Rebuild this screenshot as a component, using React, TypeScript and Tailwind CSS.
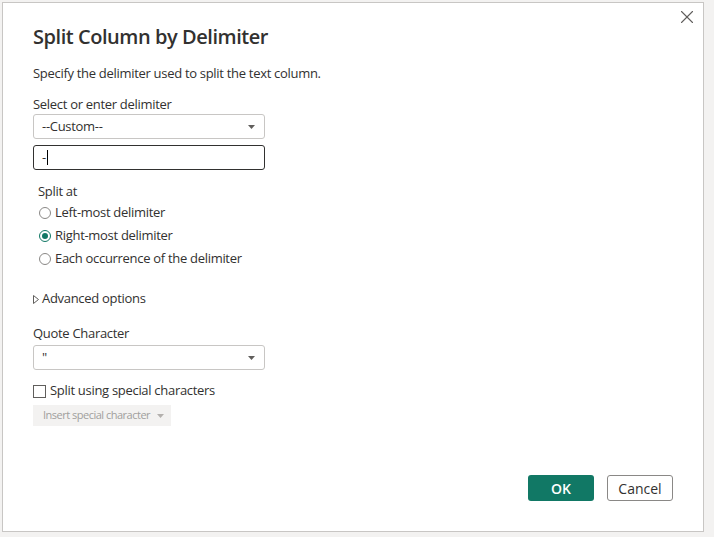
import { X } from "lucide-react";

const font = "font-['Segoe_UI','Open_Sans',sans-serif]";

function Caret({ color = "#605e5c" }: { color?: string }) {
  return (
    <svg width="7" height="4" viewBox="0 0 7 4">
      <path d="M0 0 L7 0 L3.5 4 Z" fill={color} />
    </svg>
  );
}

function Select({ value }: { value: string }) {
  return (
    <div className="flex h-[25px] w-[232px] items-center justify-between rounded-[3px] border border-[#c8c6c4] bg-white pl-[8px] pr-[9px] text-[13px] text-[#323130]">
      <span>{value}</span>
      <Caret />
    </div>
  );
}

function Radio({ label, checked }: { label: string; checked?: boolean }) {
  return (
    <div className="flex h-[23px] items-center gap-[4px] pl-[6px]">
      <span
        className={
          "flex h-[12px] w-[12px] items-center justify-center rounded-full border " +
          (checked ? "border-[#117865]" : "border-[#8a8886]")
        }
      >
        {checked && <span className="h-[6px] w-[6px] rounded-full bg-[#117865]" />}
      </span>
      <span>{label}</span>
    </div>
  );
}

export default function App() {
  return (
    <div className={`h-[537px] w-[714px] bg-[#f3f2f1] p-[2px] tracking-[-0.3px] ${font}`}>
      <div className="relative flex h-[530px] w-[702px] flex-col border border-[#c8c6c4] bg-white pl-[30px] pr-[30px] pt-[19px] text-[13px] text-[#323130]">
        <button className="absolute right-[5px] top-[3px] text-[#605e5c]">
          <X size={22} strokeWidth={1.2} />
        </button>

        <h1 className="flex h-[30px] items-center text-[20px] font-semibold tracking-[-0.45px]">
          Split Column by Delimiter
        </h1>

        <p className="mt-[12px] flex h-[20px] items-center">
          Specify the delimiter used to split the text column.
        </p>

        <label className="mt-[11px] flex h-[20px] items-center">
          Select or enter delimiter
        </label>
        <div className="-mt-px">
          <Select value="--Custom--" />
        </div>

        <div className="mt-[6px] flex h-[25px] w-[232px] items-center rounded-[3px] border border-[#323130] pl-[8px]">
          <span>-</span>
          <span className="ml-[1px] h-[15px] w-px bg-[#000]" />
        </div>

        <div className="mt-[12px] flex h-[20px] items-center pl-[5px]">Split at</div>
        <div className="-mt-px">
          <Radio label="Left-most delimiter" />
          <Radio label="Right-most delimiter" checked />
          <Radio label="Each occurrence of the delimiter" />
        </div>

        <div className="mt-[19px] flex h-[20px] items-center gap-[3px]">
          <svg width="6" height="9" viewBox="0 0 6 9">
            <path d="M0.5 0.5 L5.5 4.5 L0.5 8.5 Z" fill="none" stroke="#605e5c" strokeWidth="1" />
          </svg>
          <span>Advanced options</span>
        </div>

        <label className="mt-[15px] flex h-[20px] items-center">Quote Character</label>
        <div className="mt-[1px]">
          <Select value={'"'} />
        </div>

        <div className="mt-[11px] flex h-[20px] items-center gap-[4px]">
          <span className="h-[13px] w-[13px] border border-[#605e5c] bg-white" />
          <span>Split using special characters</span>
        </div>

        <div className="mt-[4px] flex h-[21px] w-[138px] items-center gap-[7px] whitespace-nowrap bg-[#f3f2f1] pl-[10px] text-[11px] tracking-[-0.5px] text-[#a19f9d]">
          <span>Insert special character</span>
          <Caret color="#b3b0ad" />
        </div>

        <div className="mt-auto mb-[30px] flex justify-end gap-[13px] tracking-normal">
          <button className="h-[26px] w-[66px] rounded-[3px] bg-[#117865] text-[14px] font-semibold text-white">
            OK
          </button>
          <button className="h-[26px] w-[66px] rounded-[3px] border border-[#8a8886] bg-white text-[14px] text-[#323130]">
            Cancel
          </button>
        </div>
      </div>
    </div>
  );
}
